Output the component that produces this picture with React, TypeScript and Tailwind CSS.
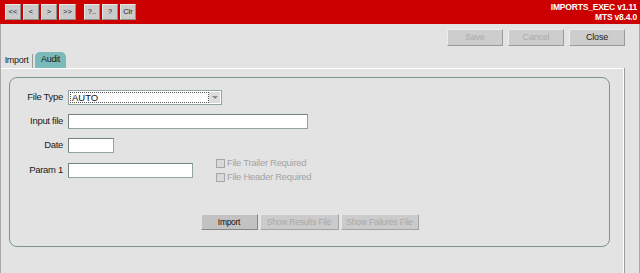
import React from "react";

const navButtons = ["<<", "<", ">", ">>"];
const helpButtons = ["?..", "?", "Clr"];

const NavButton: React.FC<{ label: string; wide?: boolean }> = ({ label, wide }) => (
  <button
    className={
      (wide ? "w-[17px] " : "w-[16px] ") +
      "h-[16px] flex items-center justify-center bg-[#cbcbcb] border border-[#e6e6e6] border-r-[#8f8f8f] border-b-[#8f8f8f] text-[7.5px] text-[#222] leading-none"
    }
  >
    {label}
  </button>
);

const TopButton: React.FC<{ label: string; disabled?: boolean }> = ({ label, disabled }) => (
  <button
    className={
      "w-[56px] h-[17px] flex items-center justify-center bg-[#cdcdcd] border border-[#ececec] border-r-[#9a9a9a] border-b-[#9a9a9a] text-[9px] tracking-[-0.2px] leading-none " +
      (disabled ? "text-[#ababab]" : "text-[#1a1a1a]")
    }
  >
    {label}
  </button>
);

const Label: React.FC<{ text: string }> = ({ text }) => (
  <span className="w-[53px] mr-[5px] text-right text-[9.5px] tracking-[-0.3px] text-[#1a1a1a]">{text}</span>
);

const TextBox: React.FC<{ w: string }> = ({ w }) => (
  <div className={w + " h-[15px] bg-white border border-[#8fa3a3] border-t-[#6f8585] border-l-[#6f8585]"} />
);

const Check: React.FC<{ text: string }> = ({ text }) => (
  <div className="h-[14px] flex items-center">
    <span className="w-[9px] h-[9px] bg-[#d9d9d9] border border-[#a6a6a6] mr-[2px]" />
    <span className="text-[9.5px] tracking-[-0.3px] text-[#a4a4a4]">{text}</span>
  </div>
);

const App: React.FC = () => {
  return (
    <div className="w-[640px] h-[273px] overflow-hidden flex flex-col bg-[#e3e3e3] font-['Liberation_Sans',Arial,sans-serif]">
      <header className="h-[24px] shrink-0 bg-[#cc0000] flex justify-between">
        <div className="flex items-start pt-[4px] pl-[5px]">
          <div className="flex gap-[2px]">
            {navButtons.map((b, i) => (
              <NavButton key={b} label={b} wide={i === 3} />
            ))}
          </div>
          <div className="flex gap-[2px] ml-[8px]">
            {helpButtons.map((b) => (
              <NavButton key={b} label={b} />
            ))}
          </div>
        </div>
        <div className="flex flex-col items-end pt-[2px] pr-[3px] text-white font-bold text-[8.5px] tracking-[-0.2px] leading-[10px]">
          <span>IMPORTS_EXEC v1.11</span>
          <span>MTS v8.4.0</span>
        </div>
      </header>

      <main className="flex-1 flex flex-col border-x border-[#a9a9a9]">
        <div className="flex justify-end gap-[5px] pt-[5px] pr-[14px]">
          <TopButton label="Save" disabled />
          <TopButton label="Cancel" disabled />
          <TopButton label="Close" />
        </div>

        <div className="flex items-end mt-[6px]">
          <div className="w-[32px] h-[14px] flex items-center justify-center border-r border-[#9a9a9a] text-[9px] tracking-[-0.3px] text-[#1a1a1a]">
            Import
          </div>
          <div className="ml-[2px] w-[31px] h-[16px] flex items-center justify-center rounded-t-[5px] bg-[#7bbaba] text-[9px] tracking-[-0.3px] text-[#1a1a1a]">
            Audit
          </div>
        </div>

        <section className="flex-1 mr-[14px] border-r border-[#9c9c9c]">
          <div className="h-full border-t border-r border-white pt-[8px] pl-[8px] pr-[13px]">
            <div className="h-[170px] rounded-[8px] border border-[#7a9393] flex flex-col pt-[12px]">
              <div className="flex items-center h-[15px]">
                <Label text="File Type" />
                <div className="w-[154px] h-[15px] bg-white border border-[#8fa3a3] flex items-center p-[1px]">
                  <div className="flex-1 h-full border border-dotted border-[#555] flex items-center pl-[1px] text-[9.5px] text-[#111] leading-none">
                    AUTO
                  </div>
                  <div className="w-[11px] h-full bg-[#dcdcdc] flex items-center justify-center">
                    <span className="w-0 h-0 border-x-[3px] border-x-transparent border-t-[3px] border-t-[#8a8a8a]" />
                  </div>
                </div>
              </div>
              <div className="flex items-center mt-[9px]">
                <Label text="Input file" />
                <TextBox w="w-[240px]" />
              </div>
              <div className="flex items-center mt-[9px]">
                <Label text="Date" />
                <TextBox w="w-[46px]" />
              </div>
              <div className="flex items-center mt-[3px]">
                <Label text="Param 1" />
                <TextBox w="w-[125px]" />
                <div className="flex flex-col ml-[23px]">
                  <Check text="File Trailer Required" />
                  <Check text="File Header Required" />
                </div>
              </div>
              <div className="flex justify-center gap-[2px] mt-[30px]">
                <button className="w-[57px] h-[16px] bg-[#c2c2c2] border border-[#e2e2e2] border-r-[#858585] border-b-[#858585] text-[8.5px] tracking-[-0.3px] text-[#111] leading-none">
                  Import
                </button>
                <button className="w-[79px] h-[16px] bg-[#cbcbcb] border border-[#e6e6e6] border-r-[#a3a3a3] border-b-[#a3a3a3] text-[8.5px] tracking-[-0.2px] text-[#a8a8a8] leading-none">
                  Show Results File
                </button>
                <button className="w-[78px] h-[16px] bg-[#cbcbcb] border border-[#e6e6e6] border-r-[#a3a3a3] border-b-[#a3a3a3] text-[8.5px] tracking-[-0.2px] text-[#a8a8a8] leading-none">
                  Show Failures File
                </button>
              </div>
            </div>
          </div>
        </section>
      </main>
    </div>
  );
};

export default App;
